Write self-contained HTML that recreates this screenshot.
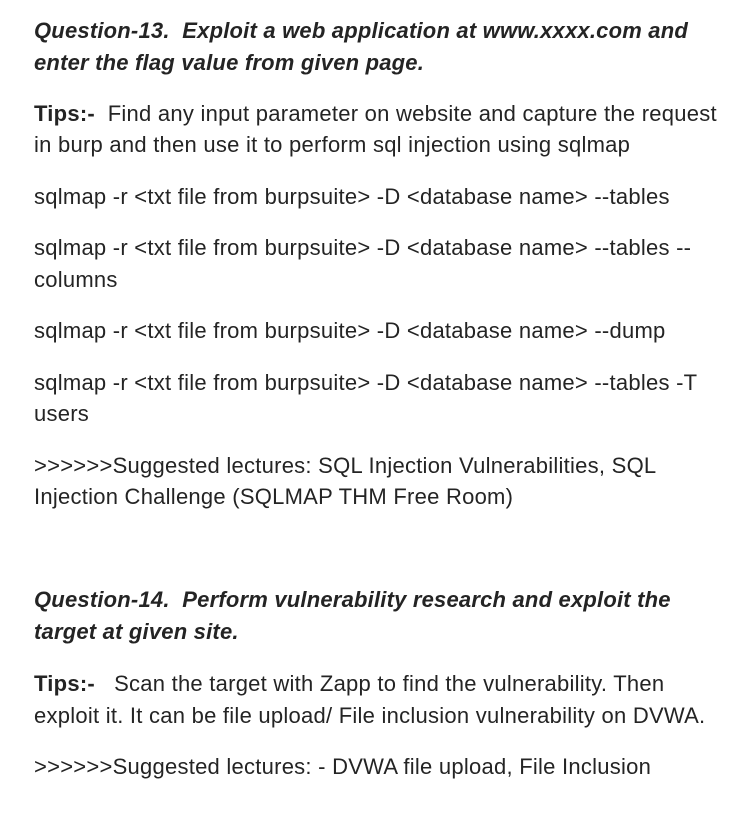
<!DOCTYPE html>
<html><head><meta charset="utf-8"><style>
body{margin:0;background:#fff;width:754px;height:816px;position:relative;overflow:hidden;font-family:"Liberation Sans",Arial,sans-serif;color:#242424}
.l{position:absolute;left:34px;white-space:nowrap;font-size:22px;line-height:32px;letter-spacing:0.25px}
.h{font-weight:bold;font-style:italic;letter-spacing:0.2px}
b{font-weight:bold}
</style></head><body>
<div class="l h" style="top:15px">Question-13.&nbsp; Exploit a web application at www.xxxx.com and</div>
<div class="l h" style="top:47px">enter the flag value from given page.</div>
<div class="l" style="top:98px"><b>Tips:-</b>&nbsp; Find any input parameter on website and capture the request</div>
<div class="l" style="top:129px">in burp and then use it to perform sql injection using sqlmap</div>
<div class="l" style="top:181px">sqlmap -r &lt;txt file from burpsuite&gt; -D &lt;database name&gt; --tables</div>
<div class="l" style="top:232px">sqlmap -r &lt;txt file from burpsuite&gt; -D &lt;database name&gt; --tables --</div>
<div class="l" style="top:264px">columns</div>
<div class="l" style="top:315px">sqlmap -r &lt;txt file from burpsuite&gt; -D &lt;database name&gt; --dump</div>
<div class="l" style="top:367px">sqlmap -r &lt;txt file from burpsuite&gt; -D &lt;database name&gt; --tables -T</div>
<div class="l" style="top:398px">users</div>
<div class="l" style="top:450px">&gt;&gt;&gt;&gt;&gt;&gt;Suggested lectures: SQL Injection Vulnerabilities, SQL</div>
<div class="l" style="top:481px">Injection Challenge (SQLMAP THM Free Room)</div>
<div class="l h" style="top:584px">Question-14.&nbsp; Perform vulnerability research and exploit the</div>
<div class="l h" style="top:616px">target at given site.</div>
<div class="l" style="top:668px"><b>Tips:-</b>&nbsp;&nbsp; Scan the target with Zapp to find the vulnerability. Then</div>
<div class="l" style="top:700px">exploit it. It can be file upload/ File inclusion vulnerability on DVWA.</div>
<div class="l" style="top:751px">&gt;&gt;&gt;&gt;&gt;&gt;Suggested lectures: - DVWA file upload, File Inclusion</div>
</body></html>
